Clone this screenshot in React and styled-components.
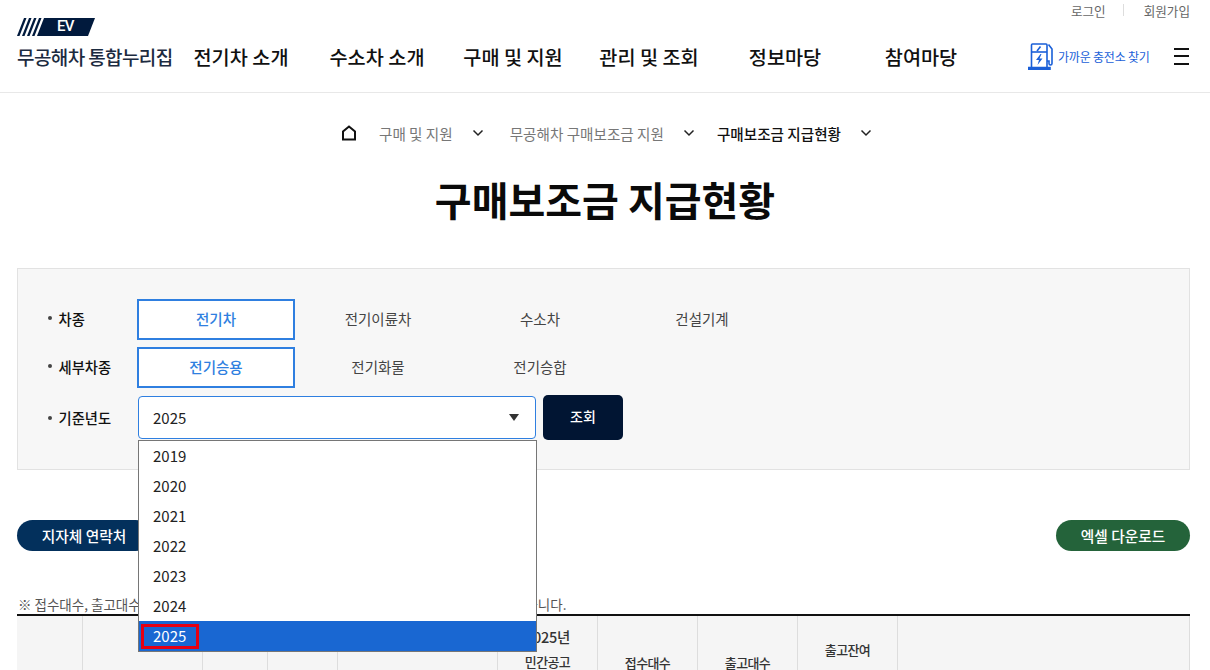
import React from "react";
import styled, { createGlobalStyle } from "styled-components";

const GlobalStyle = createGlobalStyle`
  html, body {
    margin: 0;
    padding: 0;
    height: 670px;
    overflow: hidden;
    background: #fff;
    font-family: "Noto Sans CJK KR", "Noto Sans", sans-serif;
    color: #111;
  }
  * { box-sizing: border-box; }
`;

const Page = styled.div`
  width: 1210px;
  height: 670px;
  overflow: hidden;
`;

const Header = styled.header`
  position: relative;
  height: 93px;
  border-bottom: 1px solid #e8e8e8;
  padding: 0 20px 0 17px;
`;
const UtilBar = styled.div`
  display: flex;
  justify-content: flex-end;
  align-items: center;
  height: 20px;
  font-size: 12.6px;
  color: #666;
`;
const UtilDivider = styled.span`
  width: 1px;
  height: 12px;
  background: #ddd;
  margin: 0 20px 0 17px;
`;
const MainBar = styled.div`
  display: flex;
  align-items: center;
  height: 46px;
  margin-top: 13px;
`;
const Brand = styled.div`
  position: absolute;
  top: 17px;
  left: 17px;
`;
const SiteName = styled.div`
  width: 155px;
  font-size: 19px;
  font-weight: 500;
  letter-spacing: -0.6px;
  color: #1c2b40;
  white-space: nowrap;
`;
const Nav = styled.nav`
  display: grid;
  grid-template-columns: repeat(6, 136px);
`;
const NavItem = styled.a`
  padding-left: 2px;
  text-align: center;
  font-size: 19.7px;
  font-weight: 500;
  color: #111;
  white-space: nowrap;
`;
const Finder = styled.a`
  display: flex;
  align-items: center;
  gap: 5px;
  margin-left: 40px;
  font-size: 12px;
  letter-spacing: -0.2px;
  color: #1a5fd8;
  white-space: nowrap;
`;
const Burger = styled.button`
  display: flex;
  flex-direction: column;
  gap: 5.5px;
  width: 15px;
  margin-left: 24px;
  padding: 0;
  border: 0;
  background: none;
  span {
    height: 2px;
    background: #111;
  }
`;

const Breadcrumb = styled.div`
  display: flex;
  justify-content: center;
  align-items: center;
  height: 24px;
  margin-top: 28px;
  padding-left: 3px;
  font-size: 14.6px;
  color: #777;
`;
const Crumb = styled.span`
  display: flex;
  align-items: center;
  gap: 19px;
  margin-left: ${({ $left }) => $left || 0}px;
  font-weight: ${({ $current }) => ($current ? 500 : 400)};
  color: ${({ $current }) => ($current ? "#111" : "#777")};
  white-space: nowrap;
`;

const Title = styled.h1`
  margin: 21px 0 0;
  height: 66px;
  line-height: 66px;
  text-align: center;
  font-size: 40px;
  font-weight: 700;
  color: #0a0a0a;
`;

const Panel = styled.section`
  position: relative;
  margin: 36px 20px 0 17px;
  height: 202px;
  padding: 30px 0 0 30px;
  background: #f7f7f7;
  border: 1px solid #e2e2e2;
`;
const FilterRow = styled.div`
  display: flex;
  align-items: ${({ $top }) => ($top ? "flex-start" : "center")};
  height: 41px;
  margin-bottom: 7px;
`;
const Label = styled.div`
  display: flex;
  align-items: center;
  gap: 6.5px;
  width: 89px;
  font-size: 14.3px;
  font-weight: 500;
  color: #111;
  white-space: nowrap;
  padding-top: ${({ $top }) => ($top ? "12px" : 0)};
  padding-bottom: ${({ $top }) => ($top ? 0 : "3px")};
  &::before {
    content: "";
    width: 4px;
    height: 4px;
    border-radius: 50%;
    background: #444;
  }
`;
const TabGroup = styled.div`
  display: flex;
  gap: 4px;
`;
const Tab = styled.button`
  width: 158px;
  height: 41px;
  padding: 0 0 2px;
  font-family: inherit;
  font-size: 14.5px;
  font-weight: ${({ $active }) => ($active ? 500 : 400)};
  color: ${({ $active }) => ($active ? "#2f7fe0" : "#444")};
  background: ${({ $active }) => ($active ? "#fff" : "transparent")};
  border: ${({ $active }) => ($active ? "2px solid #2f7fe0" : "0")};
`;
const SelectWrap = styled.div`
  position: relative;
  display: flex;
  gap: 7px;
  margin-left: 1px;
  align-items: flex-start;
`;
const SelectBox = styled.div`
  display: flex;
  align-items: center;
  justify-content: space-between;
  width: 398px;
  height: 43px;
  margin-top: 1px;
  padding: 0 16px 0 14px;
  font-size: 15px;
  color: #222;
  background: #fff;
  border: 1px solid #2f7fe0;
  border-radius: 4px;
`;
const Caret = styled.span`
  width: 0;
  height: 0;
  border-left: 5px solid transparent;
  border-right: 5px solid transparent;
  border-top: 7px solid #333;
`;
const SearchButton = styled.button`
  width: 80px;
  height: 45px;
  padding: 0 0 3px;
  font-family: inherit;
  font-size: 14px;
  font-weight: 500;
  color: #fff;
  background: #011533;
  border: 0;
  border-radius: 5px;
`;
const Dropdown = styled.ul`
  position: absolute;
  z-index: 5;
  top: 45px;
  left: 0;
  width: 399px;
  margin: 0;
  padding: 0;
  list-style: none;
  background: #fff;
  border: 1px solid #767676;
`;
const Option = styled.li`
  height: 30px;
  display: flex;
  align-items: center;
  padding-left: 2px;
  font-size: 15px;
  color: ${({ $selected }) => ($selected ? "#fff" : "#222")};
  background: ${({ $selected }) => ($selected ? "#1967d2" : "#fff")};
`;
const OptionText = styled.span`
  display: flex;
  align-items: center;
  height: 25px;
  padding: 0 10px 1px 9px;
  border: ${({ $marked }) => ($marked ? "3px solid #e60012" : "3px solid transparent")};
`;

const ActionBar = styled.div`
  display: flex;
  justify-content: space-between;
  margin: 50px 20px 0 17px;
`;
const Pill = styled.button`
  width: ${({ $width }) => $width}px;
  height: 31px;
  padding: 0;
  font-family: inherit;
  font-size: 14.7px;
  font-weight: 500;
  color: #fff;
  background: ${({ $bg }) => $bg};
  border: 0;
  border-radius: 16px;
`;
const Note = styled.p`
  margin: 43px 0 0 18px;
  height: 20px;
  line-height: 20px;
  font-size: 13.5px;
  color: #555;
  white-space: nowrap;
`;
const TableHead = styled.div`
  display: grid;
  grid-template-columns: 66px 120px 65px 70px 160px 100px 100px 100px 100px 1fr;
  height: 100px;
  margin: 0 20px 0 17px;
  background: #f5f5f5;
  border-top: 2px solid #111;
`;
const HeadCell = styled.div`
  display: flex;
  flex-direction: column;
  align-items: center;
  padding-top: ${({ $pad }) => $pad || 0}px;
  line-height: 25px;
  font-size: 13px;
  letter-spacing: -0.6px;
  font-weight: 500;
  color: #333;
  border-right: 1px solid #ddd;
  white-space: nowrap;
`;
const HeadYear = styled.span`
  font-size: 14.5px;
  letter-spacing: -0.3px;
`;

const EvLogo = () => (
  <svg width="78" height="18" viewBox="0 0 78 18">
    <g fill="#011a3d">
      <path d="M0 18 L7 0 H9.5 L2.5 18Z" />
      <path d="M5 18 L12 0 H14.5 L7.5 18Z" />
      <path d="M10 18 L17 0 H19.5 L12.5 18Z" />
      <path d="M15 18 L22 0 H24.5 L17.5 18Z" />
      <path d="M20 18 L27 0 H78 L71 18Z" />
    </g>
  </svg>
);

const EvText = styled.span`
  position: absolute;
  top: 0;
  left: 40px;
  height: 18px;
  line-height: 18px;
  font-family: Roboto, sans-serif;
  font-size: 15px;
  font-weight: 500;
  letter-spacing: -0.6px;
  color: #fff;
`;

const HomeIcon = () => (
  <svg width="16" height="16" viewBox="0 0 16 16" fill="none" stroke="#111" strokeWidth="2">
    <path d="M2 14.5 V6.5 L8 1.5 L14 6.5 V14.5Z" />
  </svg>
);
const Chevron = () => (
  <svg width="12" height="8" viewBox="0 0 12 8" fill="none" stroke="#222" strokeWidth="1.5">
    <path d="M1.5 1.5 L6 6 L10.5 1.5" />
  </svg>
);
const ChargerIcon = () => (
  <svg width="25" height="27" viewBox="0 0 25 27" fill="none" stroke="#1a5fd8" strokeWidth="1.6">
    <path d="M3.5 25 V2 A1 1 0 0 1 4.5 1 H18 A1 1 0 0 1 19 2 V25" />
    <path d="M3.5 9 H19" />
    <path d="M0.5 26.5 V24.5 H22 V26.5Z" fill="#1a5fd8" />
    <path d="M19 18 H21 V20.5 A1.5 1.5 0 0 0 24 20.5 V6 L20.5 1.5" />
    <path d="M12.5 3.5 L9 8" />
    <path d="M12.5 11 L8 17 H11 L9.5 22 L14.5 15.5 H11.5 L13.5 11Z" fill="#1a5fd8" stroke="none" />
  </svg>
);

const navItems = ["전기차 소개", "수소차 소개", "구매 및 지원", "관리 및 조회", "정보마당", "참여마당"];
const years = ["2019", "2020", "2021", "2022", "2023", "2024", "2025"];

export default function App() {
  return (
    <Page>
      <GlobalStyle />
      <Header>
        <UtilBar>
          <span>로그인</span>
          <UtilDivider />
          <span>회원가입</span>
        </UtilBar>
        <Brand>
          <EvLogo />
          <EvText>EV</EvText>
        </Brand>
        <MainBar>
          <SiteName>무공해차 통합누리집</SiteName>
          <Nav>
            {navItems.map(item => (
              <NavItem key={item}>{item}</NavItem>
            ))}
          </Nav>
          <Finder>
            <ChargerIcon />
            가까운 충전소 찾기
          </Finder>
          <Burger>
            <span />
            <span />
            <span />
          </Burger>
        </MainBar>
      </Header>

      <Breadcrumb>
        <HomeIcon />
        <Crumb $left={22}>구매 및 지원 <Chevron /></Crumb>
        <Crumb $left={26}>무공해차 구매보조금 지원 <Chevron /></Crumb>
        <Crumb $left={22} $current>구매보조금 지급현황 <Chevron /></Crumb>
      </Breadcrumb>

      <Title>구매보조금 지급현황</Title>

      <Panel>
        <FilterRow>
          <Label>차종</Label>
          <TabGroup>
            <Tab $active>전기차</Tab>
            <Tab>전기이륜차</Tab>
            <Tab>수소차</Tab>
            <Tab>건설기계</Tab>
          </TabGroup>
        </FilterRow>
        <FilterRow>
          <Label>세부차종</Label>
          <TabGroup>
            <Tab $active>전기승용</Tab>
            <Tab>전기화물</Tab>
            <Tab>전기승합</Tab>
          </TabGroup>
        </FilterRow>
        <FilterRow $top>
          <Label $top>기준년도</Label>
          <SelectWrap>
            <SelectBox>
              2025
              <Caret />
            </SelectBox>
            <SearchButton>조회</SearchButton>
            <Dropdown>
              {years.map(year => (
                <Option key={year} $selected={year === "2025"}>
                  <OptionText $marked={year === "2025"}>{year}</OptionText>
                </Option>
              ))}
            </Dropdown>
          </SelectWrap>
        </FilterRow>
      </Panel>

      <ActionBar>
        <Pill $width={134} $bg="#03305c">지자체 연락처</Pill>
        <Pill $width={134} $bg="#24633a">엑셀 다운로드</Pill>
      </ActionBar>

      <Note>※ 접수대수, 출고대수, 출고잔여대수는 지자체 사정 및 보조금 여건에 따라 실제와 다를 수 있습니다.</Note>

      <TableHead>
        <HeadCell />
        <HeadCell />
        <HeadCell />
        <HeadCell />
        <HeadCell />
        <HeadCell $pad={8}>
          <HeadYear>2025년</HeadYear>
          <span>민간공고</span>
        </HeadCell>
        <HeadCell $pad={34}>접수대수</HeadCell>
        <HeadCell $pad={34}>출고대수</HeadCell>
        <HeadCell $pad={21}>출고잔여</HeadCell>
        <HeadCell />
      </TableHead>
    </Page>
  );
}
